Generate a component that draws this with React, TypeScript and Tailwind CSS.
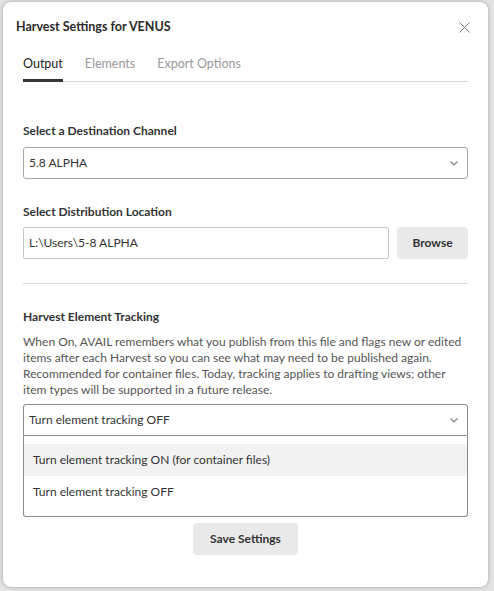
import React from 'react';

const Chevron: React.FC = () => (
  <svg width="10" height="10" viewBox="0 0 10 10" className="text-[#8a8a8a]">
    <path d="M1.5 3.5 L5 6.8 L8.5 3.5" fill="none" stroke="currentColor" strokeWidth="1.3" />
  </svg>
);

const App: React.FC = () => {
  return (
    <div className="w-[494px] h-[591px] bg-[#e4e4e4] overflow-hidden pt-[2px] pl-[3px]" style={{ fontFamily: 'Lato, "Noto Sans", sans-serif' }}>
      <div className="w-[485px] h-[585px] bg-white rounded-lg shadow-[0_0_4px_rgba(0,0,0,0.3)] flex flex-col text-[#333] text-[12px] leading-[16px]">
        {/* Header */}
        <header className="flex items-center justify-between pl-[13px] pr-[18px] pt-[10px] h-[40px]">
          <h1 className="text-[12.5px] font-bold text-[#2b2b2b]">Harvest Settings for VENUS</h1>
          <svg width="11" height="11" viewBox="0 0 11 11" className="text-[#777]">
            <path d="M0.5 0.5 L10.5 10.5 M10.5 0.5 L0.5 10.5" stroke="currentColor" strokeWidth="1" />
          </svg>
        </header>

        <div className="px-[20px] flex flex-col">
          {/* Tabs */}
          <nav className="flex gap-[22px] border-b border-[#d6d6d6] text-[12.5px] mt-[14px]">
            <span className="pb-[7px] border-b-[3px] border-[#333] -mb-px text-[#222]">Output</span>
            <span className="pb-[7px] text-[#999]">Elements</span>
            <span className="pb-[7px] text-[#999]">Export Options</span>
          </nav>

          <section className="mt-[41px] flex flex-col gap-[8px]">
            <label className="font-bold text-[#333]">Select a Destination Channel</label>
            <div className="h-[32px] border border-[#a6a6a6] rounded-[3px] flex items-center justify-between pl-[5px] pr-[8px]">
              <span>5.8 ALPHA</span>
              <Chevron />
            </div>
          </section>

          <section className="mt-[25px] flex flex-col gap-[7px]">
            <label className="font-bold text-[#333]">Select Distribution Location</label>
            <div className="flex gap-[8px]">
              <div className="flex-1 h-[32px] border border-[#c8c8c8] rounded-[2px] flex items-center pl-[5px]">
                L:\Users\5-8 ALPHA
              </div>
              <button className="w-[71px] h-[32px] bg-[#e9e9e9] rounded-[4px] font-bold text-[#333]">Browse</button>
            </div>
          </section>

          <div className="mt-[24px] border-t border-[#d6d6d6]" />

          <section className="mt-[25px] flex flex-col">
            <label className="font-bold text-[#333]">Harvest Element Tracking</label>
            <p className="mt-[9px] text-[#555]">
              When On, AVAIL remembers what you publish from this file and flags new or edited items after each Harvest so you can see what may need to be published again. Recommended for container files. Today, tracking applies to drafting views; other item types will be supported in a future release.
            </p>
            <div className="mt-[6px] h-[32px] border border-[#8a8a8a] rounded-t-[3px] flex items-center justify-between pl-[5px] pr-[8px]">
              <span>Turn element tracking OFF</span>
              <Chevron />
            </div>
            <ul className="border border-t-0 border-[#8a8a8a] rounded-b-[3px] pt-[8px] pb-[8px]">
              <li className="h-[32px] flex items-center pl-[9px] bg-[#f2f2f2]">Turn element tracking ON (for container files)</li>
              <li className="h-[32px] flex items-center pl-[9px]">Turn element tracking OFF</li>
            </ul>
          </section>

          <div className="flex justify-center mt-[6px]">
            <button className="w-[105px] h-[32px] bg-[#e9e9e9] rounded-[4px] font-bold text-[#333]">Save Settings</button>
          </div>
        </div>
      </div>
    </div>
  );
};

export default App;
